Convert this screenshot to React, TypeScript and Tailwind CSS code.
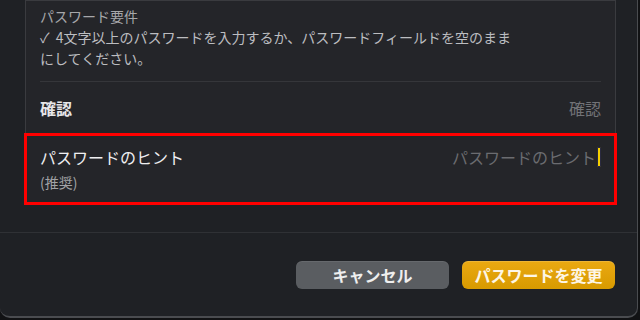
export default function App() {
  return (
    <div
      className="w-[640px] h-[320px] bg-[#111214] overflow-hidden"
      style={{ fontFamily: '"Noto Sans CJK JP", "Noto Sans", sans-serif' }}
    >
      <div className="w-[638px] h-[318px] bg-[#1f2125] rounded-b-[10px] border-b-2 border-r border-[#4a4c50] flex flex-col overflow-hidden">
        {/* form panel area */}
        <div className="h-[233px] px-[25px] border-b border-[#2f3135]">
          <div className="w-[591px] bg-[#242529] border-x border-t border-[#3a3b3f]">
            <div className="px-[14px] pt-[5px] pb-[12px] text-[14px] leading-[21px]">
              <div className="text-[#a6a7aa]">パスワード要件</div>
              <div className="text-[#bcbdc0]">✓{'\u00a0 '}4文字以上のパスワードを入力するか、パスワードフィールドを空のまま</div>
              <div className="text-[#bcbdc0]">にしてください。</div>
            </div>
            <div className="mx-[14px] h-px bg-[#35363a]" />
            <div className="h-[51px] px-[14px] flex items-center justify-between text-[16px]">
              <span className="font-bold text-[#e6e6e8]">確認</span>
              <span className="text-[#727377]">確認</span>
            </div>
            <div className="-mx-[2px] h-[72px] border-[3px] border-[#ff0000] px-[13px] pt-[10px] flex justify-between">
              <div className="flex flex-col">
                <span className="text-[16px] leading-[22px] text-[#efeff1]">パスワードのヒント</span>
                <span className="mt-[4px] text-[14px] leading-[20px] text-[#a2a3a6]">(推奨)</span>
              </div>
              <div className="flex items-start h-[22px]">
                <span className="text-[16px] leading-[22px] text-[#6b6c70]">パスワードのヒント</span>
                <span className="ml-[1px] mt-[1px] w-[4px] h-[20px] bg-[#f5d000] border border-[#2a2a40] rounded-[1px]" />
              </div>
            </div>
          </div>
        </div>
        {/* footer */}
        <div className="flex-1 flex justify-end gap-[13px] pt-[28px] pr-[22px]">
          <button className="w-[153px] h-[28px] rounded-[6px] bg-[#5a5d61] text-[16px] leading-[28px] font-semibold text-[#eeeeee] shadow-[inset_0_1px_0_rgba(255,255,255,0.08)]">
            キャンセル
          </button>
          <button className="w-[153px] h-[28px] rounded-[6px] bg-gradient-to-b from-[#eaa912] to-[#d89a00] text-[16px] leading-[28px] font-semibold text-[#fdf6e6] shadow-[inset_0_1px_0_rgba(255,255,255,0.15)]">
            パスワードを変更
          </button>
        </div>
      </div>
    </div>
  );
}
